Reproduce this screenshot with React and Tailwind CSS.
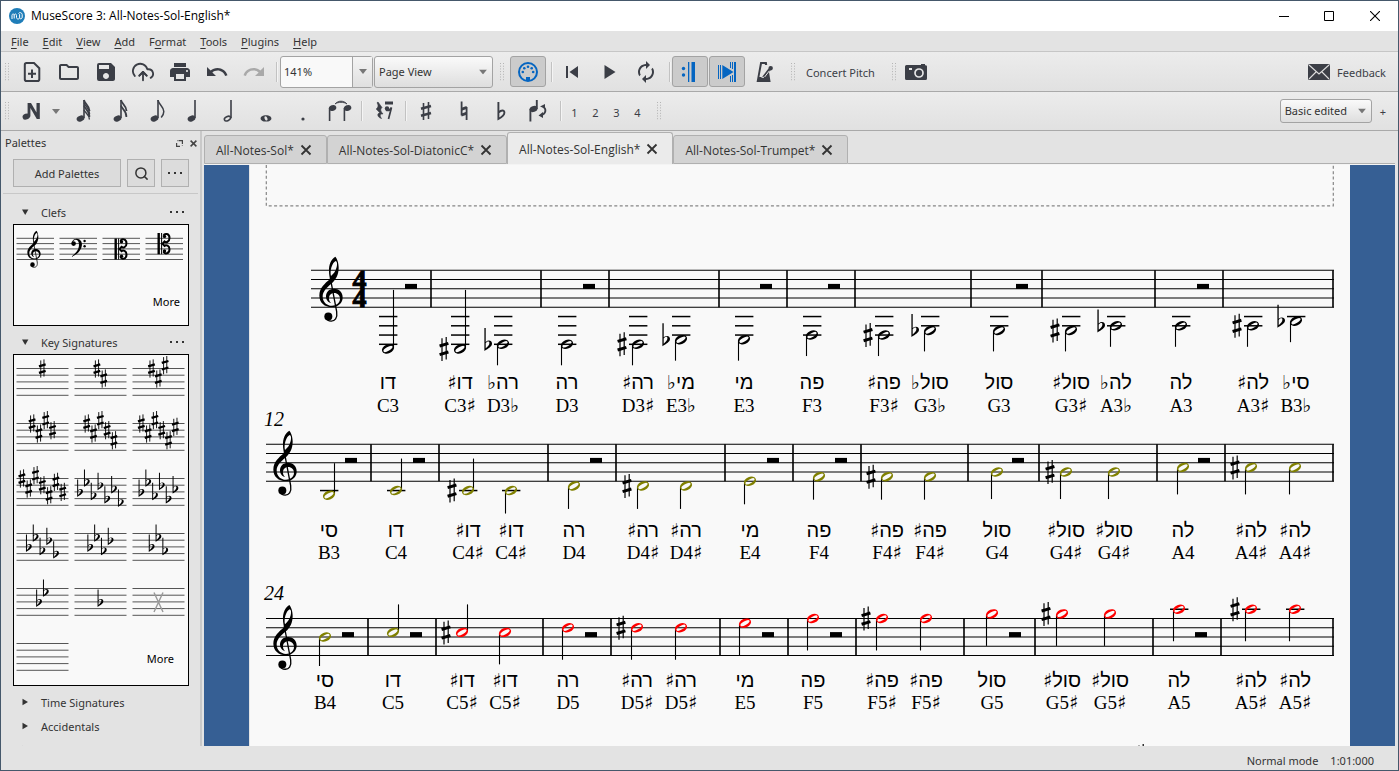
import React from "react";
import { MdPrint, MdSync, MdOutlineFolder, MdSave, MdUndo, MdRedo } from "react-icons/md";
import { FiUploadCloud, FiSearch } from "react-icons/fi";

const SPACE = 9.25;

/* ---------- engraving glyphs, drawn around their own origin ---------- */

function Sharp({ x, y, scale = 1 }) {
  return (
    <g transform={`translate(${x} ${y}) scale(${scale})`} stroke="currentColor" fill="none">
      <path d="M-2 -10.6V12M2.2 -12V10.6" strokeWidth="1.2" />
      <path d="M-4.4 -2.9L4.4 -5.5M-4.4 5.7L4.4 3.1" strokeWidth="3" />
    </g>
  );
}

function Flat({ x, y, scale = 1 }) {
  return (
    <g transform={`translate(${x} ${y}) scale(${scale})`}>
      <path
        fill="currentColor"
        fillRule="evenodd"
        d="M-3.6 -16.4H-2.3V-2.4C0.2 -4.6 4 -4 4 -0.8C4 2.4 0.4 4.2 -3.6 6.6ZM-2.3 4C-0.2 2.2 1.4 0.6 1.4 -1.4C1.4 -3.6 -1 -3.2 -2.3 -1.2Z"
      />
    </g>
  );
}

function TrebleClef({ x, y, scale = 1 }) {
  return (
    <g transform={`translate(${x} ${y}) scale(${scale / 3}) translate(-392 -505)`}>
      <path
        fill="currentColor"
        fillRule="evenodd"
        d="M405 381C393 387 385 405 386 425C386 434 388 441 389 448C374 461 357 475 357 497C357 519 373 532 394 532C414 532 427 519 427 503C427 487 415 477 401 477C386 477 377 488 377 500C377 510 384 518 392 520C387 514 385 508 386 503C387 495 394 490 401 490C412 490 419 498 419 507C419 519 408 528 395 528C379 528 367 516 367 500C367 486 378 474 394 461C407 450 415 434 415 414C415 399 410 386 405 381ZM406 394C411 396 411 404 409 412C406 425 399 433 392 439C388 424 395 399 406 394Z"
      />
      <path d="M390 445L409 546C412 566 403 574 393 574C384 574 378 570 376 563" fill="none" stroke="currentColor" strokeWidth="4" />
      <circle cx="384" cy="560" r="12" fill="currentColor" />
    </g>
  );
}

const HEAD =
  "M-5.84 2.36A6.3 4.3 -22 1 1 5.84 -2.36A6.3 4.3 -22 1 1 -5.84 2.36ZM-4.41 2.6A5.1 1.9 -30 1 0 4.41 -2.6A5.1 1.9 -30 1 0 -4.41 2.6Z";

/* ---------- score data: [x, step above bottom line, hebrew, latin, accidental, stem] ---------- */

const OLIVE = "#808000";
const RED = "#ff0000";

const systems = [
  {
    top: 270.3, left: 311, clefX: 331, number: null, heb: 389, lat: 412,
    bars: [431, 541, 609, 719, 787, 855, 971, 1042, 1155, 1223, 1333],
    rests: [411, 589, 766, 834, 1022, 1203],
    notes: [
      [388, -9, "דו", "C3", "", "up"],
      [460, -9, "דו♯", "C3♯", "s", "up"],
      [503, -8, "רה♭", "D3♭", "f"],
      [567, -8, "רה", "D3", ""],
      [638, -8, "רה♯", "D3♯", "s"],
      [681, -7, "מי♭", "E3♭", "f"],
      [744, -7, "מי", "E3", ""],
      [812, -6, "פה", "F3", ""],
      [884, -6, "פה♯", "F3♯", "s"],
      [930, -5, "סול♭", "G3♭", "f"],
      [999, -5, "סול", "G3", ""],
      [1071, -5, "סול♯", "G3♯", "s"],
      [1116, -4, "לה♭", "A3♭", "f"],
      [1181, -4, "לה", "A3", ""],
      [1253, -4, "לה♯", "A3♯", "s"],
      [1296, -3, "סי♭", "B3♭", "f"],
    ],
  },
  {
    top: 444.3, left: 266, clefX: 285, number: "12", heb: 537, lat: 559,
    bars: [371, 439, 548, 616, 725, 793, 861, 968, 1039, 1157, 1225, 1333],
    rests: [351, 419, 596, 773, 841, 1018, 1204],
    notes: [
      [329, -3, "סי", "B3", "", "up", OLIVE],
      [396, -2, "דו", "C4", "", "up", OLIVE],
      [468, -2, "דו♯", "C4♯", "s", "up", OLIVE],
      [511, -2, "דו♯", "C4♯", "", "", OLIVE],
      [574, -1, "רה", "D4", "", "", OLIVE],
      [643, -1, "רה♯", "D4♯", "s", "", OLIVE],
      [686, -1, "רה♯", "D4♯", "", "", OLIVE],
      [750, 0, "מי", "E4", "", "", OLIVE],
      [819, 1, "פה", "F4", "", "", OLIVE],
      [887, 1, "פה♯", "F4♯", "s", "", OLIVE],
      [930, 1, "פה♯", "F4♯", "", "", OLIVE],
      [997, 2, "סול", "G4", "", "", OLIVE],
      [1066, 2, "סול♯", "G4♯", "s", "", OLIVE],
      [1114, 2, "סול♯", "G4♯", "", "", OLIVE],
      [1183, 3, "לה", "A4", "", "", OLIVE],
      [1251, 3, "לה♯", "A4♯", "s", "", OLIVE],
      [1295, 3, "לה♯", "A4♯", "", "", OLIVE],
    ],
  },
  {
    top: 618.5, left: 266, clefX: 285, number: "24", heb: 687, lat: 709,
    bars: [368, 436, 543, 611, 720, 788, 856, 964, 1035, 1153, 1221, 1333],
    rests: [348, 416, 591, 768, 836, 1015, 1201],
    notes: [
      [325, 4, "סי", "B4", "", "", OLIVE],
      [393, 5, "דו", "C5", "", "up", OLIVE],
      [462, 5, "דו♯", "C5♯", "s", "up", RED],
      [505, 5, "דו♯", "C5♯", "", "", RED],
      [568, 6, "רה", "D5", "", "", RED],
      [637, 6, "רה♯", "D5♯", "s", "", RED],
      [681, 6, "רה♯", "D5♯", "", "", RED],
      [745, 7, "מי", "E5", "", "", RED],
      [813, 8, "פה", "F5", "", "", RED],
      [882, 8, "פה♯", "F5♯", "s", "", RED],
      [926, 8, "פה♯", "F5♯", "", "", RED],
      [992, 9, "סול", "G5", "", "", RED],
      [1062, 9, "סול♯", "G5♯", "s", "", RED],
      [1110, 9, "סול♯", "G5♯", "", "", RED],
      [1179, 10, "לה", "A5", "", "", RED],
      [1251, 10, "לה♯", "A5♯", "s", "", RED],
      [1295, 10, "לה♯", "A5♯", "", "", RED],
    ],
  },
];

function stemLength(step, up) {
  if (up) return step < -5 ? 59 : step < 0 ? 32 : 28;
  if (step < -2) return 21;
  if (step < 2) return 23;
  if (step < 4) return 27;
  return step < 5 ? 29 : 32;
}

/* A note name whose trailing sharp or flat sign is set one size down. */
function NoteName({ name }) {
  const sign = /[♯♭]$/.test(name) ? name.slice(-1) : "";
  const base = sign ? name.slice(0, -1) : name;
  return (
    <>
      {base}
      {sign && <tspan className="font-['DejaVu_Sans',sans-serif] text-[19px]">{sign}</tspan>}
    </>
  );
}

function Note({ note, system }) {
  const [x, step, heb, lat, acc, stem, color = "#000"] = note;
  const bottom = system.top + 4 * SPACE;
  const y = bottom - (step * SPACE) / 2;
  const up = stem === "up";
  const ledgers = [];
  for (let s = -2; s >= step; s -= 2) ledgers.push(s);
  for (let s = 10; s <= step; s += 2) ledgers.push(s);
  const len = stemLength(step, up);
  return (
    <g>
      {ledgers.map((s) => (
        <path key={s} d={`M${x - 9} ${bottom - (s * SPACE) / 2}h18.4`} stroke="#000" strokeWidth="1.5" />
      ))}
      <path d={up ? `M${x + 5.5} ${y - 1}V${y - len}` : `M${x - 5.5} ${y + 1}V${y + len}`} stroke="#000" strokeWidth="1.1" />
      <path d={HEAD} transform={`translate(${x} ${y})`} fill={color} fillRule="evenodd" />
      {acc === "s" && <Sharp x={x - 16} y={y} />}
      {acc === "f" && <Flat x={x - 15} y={y} />}
      <text x={x} y={system.heb} textAnchor="middle" direction="rtl" className="font-['Liberation_Sans','DejaVu_Sans',sans-serif] text-[20px]">
        <NoteName name={heb} />
      </text>
      <text x={x} y={system.lat} textAnchor="middle" className="font-['Liberation_Serif','DejaVu_Sans',serif] text-[19px]">
        <NoteName name={lat} />
      </text>
    </g>
  );
}

function Score() {
  return (
    <svg viewBox="250 165 1100 581" role="img" aria-label="Score page" className="block h-[581px] w-[1100px] shrink-0 text-black">
      <path d="M266.3 165V205.8H1333.3V165" fill="none" stroke="#858585" strokeWidth="1.2" strokeDasharray="3 2.4" />
      {systems.map((s) => (
        <g key={s.top}>
          {[0, 1, 2, 3, 4].map((i) => (
            <path key={i} d={`M${s.left} ${s.top + i * SPACE}H1334`} stroke="#000" strokeWidth="1.1" />
          ))}
          {s.bars.map((b) => (
            <path key={b} d={`M${b} ${s.top}V${s.top + 4 * SPACE}`} stroke="#000" strokeWidth="1.6" />
          ))}
          {s.rests.map((r) => (
            <rect key={r} x={r - 6} y={s.top + 13.6} width="12" height="5" />
          ))}
          <TrebleClef x={s.clefX} y={s.top + 3 * SPACE} />
          {s.number && (
            <text x="264" y={s.top - 18.3} className="font-['Liberation_Serif',serif] text-[20px] italic">
              {s.number}
            </text>
          )}
          {s.notes.map((n) => (
            <Note key={n[0]} note={n} system={s} />
          ))}
        </g>
      ))}
      <g className="font-['Liberation_Serif',serif] text-[28px] font-bold" stroke="#000" strokeWidth="1">
        <text x="359.5" y="288.8" textAnchor="middle">4</text>
        <text x="359.5" y="307.3" textAnchor="middle">4</text>
      </g>
      <Sharp x={1141} y={756} />
    </svg>
  );
}

/* ---------- toolbar parts ---------- */

const Grip = () => (
  <svg width="6" height="18" className="shrink-0" aria-hidden="true">
    {[0, 1, 2, 3, 4, 5, 6].map((i) => (
      <g key={i} fill="#b4b4b4">
        <rect x="0" y={i * 2.7} width="1" height="1" />
        <rect x="3" y={i * 2.7} width="1" height="1" />
      </g>
    ))}
  </svg>
);

const Divider = () => <span className="h-5 w-[2px] shrink-0 border-l border-[#c2c2c2] bg-[#f4f4f4]" />;

function Tool({ label, children, wide = "w-[37px]" }) {
  return (
    <button type="button" aria-label={label} className={`flex h-8 shrink-0 items-center justify-center ${wide}`}>
      {children}
    </button>
  );
}

function Pressed({ label, children }) {
  return (
    <button type="button" aria-label={label} aria-pressed="true" className="flex h-[31px] w-9 shrink-0 items-center justify-center rounded-[3px] border border-[#a3a3a3] bg-[#cbcbcb] text-[#0565c1]">
      {children}
    </button>
  );
}

const Svg = ({ children, w = 24 }) => (
  <svg width={w} height="24" viewBox={`0 0 ${w} 24`} fill="currentColor" aria-hidden="true">
    {children}
  </svg>
);

const Arrow = ({ className = "" }) => (
  <svg width="8" height="5" viewBox="0 0 8 5" className={className} aria-hidden="true">
    <path d="M0 0H8L4 5Z" fill="#777" />
  </svg>
);

function NoteIcon({ flags = 0, open = false }) {
  const x = flags ? 9.5 : 10.5;
  return (
    <Svg>
      {open ? (
        <ellipse cx={x} cy="19.6" rx="3.3" ry="2" transform={`rotate(-25 ${x} 19.6)`} fill="none" stroke="currentColor" strokeWidth="1.6" />
      ) : (
        <ellipse cx={x} cy="19.6" rx="4" ry="2.9" transform={`rotate(-22 ${x} 19.6)`} />
      )}
      <path d={`M${x + 3.5} 1V19`} stroke="currentColor" strokeWidth="1.6" />
      {flags === 1 && <path d="M13 1C13.6 5.5 18.8 7.5 18.8 12.5C18.8 15 17.6 17 16.2 18.6" fill="none" stroke="currentColor" strokeWidth="1.5" />}
      {flags > 1 && (
        <path d="M13 1C13.6 5 18.6 6.5 18.6 12M13 6.5C14 10.5 18.8 11.5 18.4 18" fill="none" stroke="currentColor" strokeWidth="1.7" />
      )}
      {flags > 2 && <path d="M13 3.5C14 8 18.6 8.5 18.6 15M13 11C14.5 14.5 18.6 15.5 18.4 20.5" fill="none" stroke="currentColor" strokeWidth="1.4" />}
    </Svg>
  );
}

function Combo({ label, value, options, className }) {
  return (
    <span className={`relative inline-flex shrink-0 ${className}`}>
      <select aria-label={label} defaultValue={value} className="h-full w-full appearance-none rounded-[3px] border border-[#a3a3a3] bg-linear-to-b from-[#fafafa] to-[#dedede] pl-1 text-[#333]">
        {options.map((o) => <option key={o}>{o}</option>)}
      </select>
      <Arrow className="pointer-events-none absolute top-1/2 right-[6px] -translate-y-1/2" />
    </span>
  );
}

function MainToolbar() {
  return (
    <div className="flex h-10 items-center border-b border-[#a9a9a9] bg-linear-to-b from-[#ececec] to-[#e1e1e1] text-[#3b3e46]">
      <span className="ml-1 flex"><Grip /></span>
      <div className="ml-[2px] flex">
        <Tool label="New">
          <Svg>
            <path d="M5.8 3H14L19.3 8.2V19.2Q19.3 21 17.5 21H6.5Q4.8 21 4.8 19.2V4.8Q4.8 3 6.5 3Z" fill="none" stroke="currentColor" strokeWidth="2" />
            <path d="M12 9.5V18M8 13.7H16" stroke="currentColor" strokeWidth="2" />
          </Svg>
        </Tool>
        <Tool label="Open"><MdOutlineFolder className="size-6" /></Tool>
        <Tool label="Save"><MdSave className="size-6" /></Tool>
        <Tool label="Save online"><FiUploadCloud className="size-[22px]" /></Tool>
        <Tool label="Print"><MdPrint className="size-6" /></Tool>
        <Tool label="Undo"><MdUndo className="size-6" /></Tool>
        <Tool label="Redo"><MdRedo className="size-6 text-[#a9a9a9]" /></Tool>
      </div>
      <span className="ml-1 flex"><Divider /></span>
      <span className="ml-[2px] flex h-8 w-[93px] shrink-0 rounded-[3px] border border-[#a3a3a3] bg-[#f9f9f9]">
        <input aria-label="Zoom" defaultValue="141%" className="w-[71px] bg-transparent pl-[3px] text-[#333] outline-none" />
        <button type="button" aria-label="Zoom levels" className="flex flex-1 items-center justify-center border-l border-[#a3a3a3] bg-linear-to-b from-[#f4f4f4] to-[#e0e0e0]">
          <Arrow />
        </button>
      </span>
      <Combo label="View mode" value="Page View" options={["Page View", "Continuous View", "Single Page"]} className="ml-[1px] h-8 w-[119px]" />
      <span className="mr-1 ml-[7px] flex"><Grip /></span>
      <Pressed label="MIDI input">
        <Svg>
          <circle cx="12" cy="12" r="9" fill="none" stroke="currentColor" strokeWidth="2" />
          <circle cx="6.8" cy="12" r="1.3" /><circle cx="8.3" cy="8.3" r="1.3" /><circle cx="12" cy="6.7" r="1.3" /><circle cx="15.7" cy="8.3" r="1.3" /><circle cx="17.2" cy="12" r="1.3" />
          <rect x="10" y="17" width="4" height="4" />
        </Svg>
      </Pressed>
      <span className="ml-[5px] flex"><Divider /></span>
      <Tool label="Rewind">
        <Svg><path d="M6 6H8V18H6ZM18 6V18L9.5 12Z" /></Svg>
      </Tool>
      <Tool label="Play"><Svg><path d="M7.5 5L18.5 12L7.5 19Z" /></Svg></Tool>
      <Tool label="Loop"><MdSync className="size-6 -scale-x-100" /></Tool>
      <span className="mr-[1px] ml-[5px] flex"><Divider /></span>
      <Pressed label="Play repeats">
        <Svg>
          <circle cx="5.5" cy="8.5" r="1.7" /><circle cx="5.5" cy="15" r="1.7" />
          <path d="M10 2h1.3v20H10ZM13.5 2h3.5v20h-3.5Z" />
        </Svg>
      </Pressed>
      <span className="ml-[1px] flex">
        <Pressed label="Pan score">
          <Svg>
            <path d="M3 5h1v14H3ZM5 5h1v14H5ZM7.3 5L18.5 12L7.3 19ZM15 2h1v6h-1ZM17 2h1v7h-1ZM15 16h1v6h-1ZM17 15h1v7h-1ZM19 2h2v20h-2Z" />
          </Svg>
        </Pressed>
      </span>
      <Tool label="Metronome">
        <Svg>
          <path d="M8.2 2H14.8L15.2 5H13L12.8 4H9.9L7.4 17H10L16.5 8.5A2.2 2.2 0 1 1 18.4 10.4L17 12L18.6 22H4.6Z" />
          <path d="M12.6 17L17.4 10.8M9.5 17.3H12" stroke="#e6e6e6" strokeWidth="1" />
          <path d="M10 8.5L13.8 7.5L12 13L9 16Z" fill="#e6e6e6" />
        </Svg>
      </Tool>
      <span className="ml-[9px] flex"><Grip /></span>
      <button type="button" className="mr-[17px] ml-[9px] shrink-0 pt-[2px]">Concert Pitch</button>
      <Grip />
      <Tool label="Image capture">
        <svg width="22" height="16" viewBox="0 0 22 16" aria-hidden="true">
          <path fill="currentColor" fillRule="evenodd" d="M1.5 1H16V0H20V1.2Q22 1 22 2.6V14.5Q22 16 20.5 16H1.5Q0 16 0 14.5V2.5Q0 1 1.5 1ZM4 4V6H7V4Z" />
          <circle cx="14" cy="9" r="4" fill="none" stroke="#e6e6e6" strokeWidth="1.7" />
        </svg>
      </Tool>
      <button type="button" className="mr-3 ml-auto flex shrink-0 items-center gap-[7px]">
        <svg width="22" height="16" viewBox="0 0 22 16" aria-hidden="true">
          <rect width="22" height="16" rx="1.5" fill="#3b3e46" />
          <path d="M1 1L11 10L21 1M1 15L8 8M21 15L14 8" fill="none" stroke="#ddd" strokeWidth="1.1" />
        </svg>
        <span className="pt-[2px]">Feedback</span>
      </button>
    </div>
  );
}

function NoteToolbar() {
  return (
    <div className="flex h-[39px] items-center border-b border-[#a9a9a9] bg-linear-to-b from-[#ececec] to-[#e1e1e1] text-[#3b3e46]">
      <span className="mr-[3px] ml-1 flex"><Grip /></span>
      <Tool label="Note input" wide="w-9">
        <Svg>
          <ellipse cx="6.3" cy="17.6" rx="3.8" ry="2.9" transform="rotate(-20 6.3 17.6)" />
          <path d="M7.6 4H11L16.5 13.5V4H19.8V20H16.8L10.4 9V17.6H7.6Z" />
        </Svg>
      </Tool>
      <span className="mr-[2px] flex"><Tool label="Input mode" wide="w-3"><Arrow /></Tool></span>
      <Tool label="32nd note"><NoteIcon flags={3} /></Tool>
      <Tool label="16th note"><NoteIcon flags={2} /></Tool>
      <Tool label="Eighth note"><NoteIcon flags={1} /></Tool>
      <Tool label="Quarter note" wide="w-9"><NoteIcon /></Tool>
      <Tool label="Half note" wide="w-9"><NoteIcon open /></Tool>
      <Tool label="Whole note" wide="w-[37px]">
        <Svg><path fillRule="evenodd" d="M12 16.2C15 16.2 17.4 17.5 17.4 19.4S15 22.6 12 22.6S6.6 21.3 6.6 19.4S9 16.2 12 16.2ZM11.2 17.2C9.6 17.8 10.8 21.6 12.8 21.5C14.6 21 13 17 11.2 17.2Z" /></Svg>
      </Tool>
      <Tool label="Augmentation dot"><Svg><circle cx="12" cy="20" r="1.6" /></Svg></Tool>
      <Tool label="Tie">
        <Svg w={26}>
          <path d="M8 5C11 1.2 17 1.2 20 5C17 2.8 11 2.8 8 5Z" stroke="currentColor" strokeWidth="0.8" />
          <ellipse cx="5.6" cy="9" rx="3.8" ry="2.8" transform="rotate(-20 5.6 9)" />
          <ellipse cx="20.6" cy="9" rx="3.8" ry="2.8" transform="rotate(-20 20.6 9)" />
          <path d="M2.6 9V22M17.4 9V22" stroke="currentColor" strokeWidth="1.6" />
        </Svg>
      </Tool>
      <span className="ml-[3px] flex"><Divider /></span>
      <Tool label="Rest" wide="w-[42px]">
        <Svg>
          <path d="M6 3L10 8.5C8 10.5 8.5 12 11 15C8 14.5 7.5 16.5 9.5 19.5C5.5 18.5 4.5 14.5 7.8 13.8L4.2 10C6.5 7.8 6.5 6.5 5 3.8Z" stroke="currentColor" strokeWidth="0.6" />
          <rect x="13" y="2.5" width="8" height="3" />
          <circle cx="15" cy="9.5" r="2.2" />
          <path d="M14 11.3C16.5 12 18.5 10.5 19.5 8.5L16.5 20" fill="none" stroke="currentColor" strokeWidth="1.7" />
        </Svg>
      </Tool>
      <Divider />
      <Tool label="Sharp" wide="w-[38px]">
        <Svg><path d="M9.5 4V21M14.5 3V20" fill="none" stroke="currentColor" strokeWidth="1.6" /><path d="M7 9.8L17 7M7 16.8L17 14" stroke="currentColor" strokeWidth="2.6" /></Svg>
      </Tool>
      <Tool label="Natural">
        <Svg><path d="M9.6 2.5V16.5M14.6 21V8" fill="none" stroke="currentColor" strokeWidth="1.8" /><path d="M9.6 8.8L14.6 7V10L9.6 11.8ZM9.6 14.5L14.6 12.7V15.7L9.6 17.5Z" /></Svg>
      </Tool>
      <Tool label="Flat">
        <Svg><path fill="none" stroke="currentColor" strokeWidth="1.9" d="M9.4 3V20C13 18 15.4 16 15.4 13.4C15.4 10.8 12 11 9.8 13.4" /></Svg>
      </Tool>
      <Tool label="Flip direction">
        <Svg>
          <ellipse cx="7.5" cy="10" rx="4" ry="2.9" transform="rotate(-20 7.5 10)" />
          <path d="M4.4 10V22.5" stroke="currentColor" strokeWidth="1.9" />
          <path d="M10.8 1V10" stroke="currentColor" strokeWidth="1.9" />
          <path d="M17 7.5C20.5 10 20.5 14.5 15 16.5" fill="none" stroke="currentColor" strokeWidth="1.8" />
          <path d="M14 7.5L19 5V9.5ZM17 13V19L12.5 16.6Z" />
        </Svg>
      </Tool>
      <span className="mr-[2px] ml-1 flex"><Divider /></span>
      {["1", "2", "3", "4"].map((v) => (
        <button key={v} type="button" aria-label={`Voice ${v}`} className="h-8 w-[21px] shrink-0 pt-[3px]">{v}</button>
      ))}
      <span className="ml-[9px] flex"><Grip /></span>
      <Combo label="Workspace" value="Basic edited" options={["Basic edited", "Basic", "Advanced"]} className="ml-auto h-6 w-[92px]" />
      <button type="button" aria-label="Add workspace" className="mr-3 ml-2 pt-[2px]">+</button>
    </div>
  );
}

/* ---------- palettes ---------- */

const SHARP_STEPS = [0, 3, -1, 2, 5, 1, 4];
const FLAT_STEPS = [4, 1, 5, 2, 6, 3, 7];

function KeyCell({ sharps = 0, flats = 0, none = false }) {
  const count = sharps || flats;
  const steps = (sharps ? SHARP_STEPS : FLAT_STEPS).slice(0, count);
  const Glyph = sharps ? Sharp : Flat;
  return (
    <svg viewBox="0 0 58 55" className="block h-[55px] w-full text-black" aria-hidden="true">
      {[0, 1, 2, 3, 4].map((i) => (
        <path key={i} d={`M2.5 ${13.5 + i * 6.7}H54.5`} stroke="#555" strokeWidth="1" />
      ))}
      {steps.map((s, i) => (
        <Glyph key={i} x={28.3 + (i - (count - 1) / 2) * 6.8} y={13.5 + s * 3.35} scale={0.76} />
      ))}
      {none && <path d="M24 17.5L33 37M33 17.5L24 37" stroke="#999" strokeWidth="1.4" />}
    </svg>
  );
}

const keyCells = [
  { sharps: 1 }, { sharps: 2 }, { sharps: 3 },
  { sharps: 4 }, { sharps: 5 }, { sharps: 6 },
  { sharps: 7 }, { flats: 7 }, { flats: 6 },
  { flats: 5 }, { flats: 4 }, { flats: 3 },
  { flats: 2 }, { flats: 1 }, { none: true }, {},
];

function CClef({ y }) {
  return (
    <g transform={`translate(14.5 ${y})`}>
      <path d="M0 -10.6H2.4V10.6H0ZM3.6 -10.6H4.6V10.6H3.6Z" />
      <path d="M6 -8C7 -10.6 12 -10.5 12 -5.6C12 -1.8 8.5 -0.8 7 -2.2L5 0L7 2.2C8.5 0.8 12 1.8 12 5.6C12 10.5 7 10.6 6 8" fill="none" stroke="#000" strokeWidth="2" />
      <circle cx="7" cy="-7.3" r="1.7" /><circle cx="7" cy="7.3" r="1.7" />
    </g>
  );
}

function ClefCell({ kind }) {
  return (
    <svg viewBox="0 0 43 50" className="block h-[50px] w-full text-black" aria-hidden="true">
      {[0, 1, 2, 3, 4].map((i) => (
        <path key={i} d={`M2.5 ${13.3 + i * 5.3}H40`} stroke="#555" strokeWidth="1" />
      ))}
      {kind === "treble" && <TrebleClef x={20} y={29.2} scale={0.57} />}
      {kind === "bass" && (
        <g>
          <path d="M14.5 18C15.5 13.5 20 12.8 22.5 14.5C25.5 16.5 26 21.5 22.5 26C20 29.3 17 31 14 32C18.5 28.5 22 25 22 19.5C22 14.5 18 13.5 16 16.5Z" />
          <circle cx="16.6" cy="18.6" r="2.3" /><circle cx="27.6" cy="16" r="1.2" /><circle cx="27.6" cy="21.2" r="1.2" />
        </g>
      )}
      {kind === "alto" && <CClef y={24} />}
      {kind === "tenor" && <CClef y={18.7} />}
    </svg>
  );
}

const Dots = () => (
  <svg width="14" height="2" viewBox="0 0 14 2" aria-hidden="true">
    <path d="M0 0h2v2H0ZM6 0h2v2H6ZM12 0h2v2h-2Z" fill="#333" />
  </svg>
);

function PaletteHeader({ title, open, className = "h-6" }) {
  return (
    <div className={`flex items-center pr-[5px] pl-2 ${className}`}>
      <button type="button" aria-expanded={open} className="flex flex-1 items-center text-left">
        <svg width="8" height="8" viewBox="0 0 8 8" className="mr-3" aria-hidden="true">
          <path d={open ? "M1 1.5H7.4L4.2 7Z" : "M1.5 0.8V7.2L7 4Z"} fill="#333" />
        </svg>
        <span className="pt-[2px]">{title}</span>
      </button>
      {open && <button type="button" aria-label={`${title} options`} className="flex h-4 items-center"><Dots /></button>}
    </div>
  );
}

function Palettes() {
  const square = "flex h-7 items-center justify-center border border-[#b0b0b0] bg-[#dcdcdc]";
  return (
    <aside className="flex w-[201px] shrink-0 flex-col overflow-hidden border-r-2 border-[#c9c9c9] text-[#333]">
      <div className="flex h-6 shrink-0 items-center pr-[3px] pl-1">
        <h2 className="flex-1">Palettes</h2>
        <button type="button" aria-label="Float" className="mr-[7px]">
          <svg width="7" height="7" viewBox="0 0 7 7" aria-hidden="true"><path d="M3 0.6H6.4V4M0.6 3V6.4H4M2.5 0.6H1.5M6.4 5.5V6" fill="none" stroke="#444" strokeWidth="1.2" /></svg>
        </button>
        <button type="button" aria-label="Close palettes">
          <svg width="7" height="7" viewBox="0 0 7 7" aria-hidden="true"><path d="M0.6 0.6L6.4 6.4M6.4 0.6L0.6 6.4" stroke="#444" strokeWidth="1.5" /></svg>
        </button>
      </div>
      <div className="mx-[2px] flex h-[39px] shrink-0 gap-[6px] border-b border-[#c8c8c8] pt-1 pr-[9px] pl-[10px]">
        <button type="button" className={`flex-1 pt-[2px] ${square}`}>Add Palettes</button>
        <button type="button" aria-label="Search palettes" className={`w-7 ${square}`}><FiSearch className="size-[15px]" strokeWidth={2.4} /></button>
        <button type="button" aria-label="Palette options" className={`w-7 ${square}`}><Dots /></button>
      </div>
      <div className="pt-[6px] pr-[11px] pl-3">
        <PaletteHeader title="Clefs" open />
        <div className="grid grid-cols-4 border border-black bg-[#f9f9f9] pr-[2px]">
          {["treble", "bass", "alto", "tenor"].map((k) => <ClefCell key={k} kind={k} />)}
          <button type="button" className="col-span-4 flex h-[50px] items-center justify-end pt-1 pr-[6px] text-black">More</button>
        </div>
        <PaletteHeader title="Key Signatures" open className="h-7 pt-1" />
        <div className="grid grid-cols-3 border border-black bg-[#f9f9f9]">
          {keyCells.map((c, i) => <KeyCell key={i} {...c} />)}
          <button type="button" className="col-span-2 flex items-center justify-end pt-[2px] pr-[14px] text-black">More</button>
        </div>
        <PaletteHeader title="Time Signatures" className="mt-1 h-6" />
        <PaletteHeader title="Accidentals" />
        <PaletteHeader title="Articulations" className="h-[22px]" />
      </div>
    </aside>
  );
}

/* ---------- window ---------- */

const menus = [["", "F", "ile"], ["", "E", "dit"], ["", "V", "iew"], ["", "A", "dd"], ["F", "o", "rmat"], ["", "T", "ools"], ["", "P", "lugins"], ["", "H", "elp"]];
const tabs = ["All-Notes-Sol*", "All-Notes-Sol-DiatonicC*", "All-Notes-Sol-English*", "All-Notes-Sol-Trumpet*"];

function Tab({ name, active }) {
  return (
    <div
      className={
        active
          ? "flex h-8 items-center gap-[6px] rounded-t-[3px] border border-b-0 border-[#b0b0b0] bg-[#ebebeb] pr-[14px] pl-[11px]"
          : "flex h-[29px] items-center gap-[6px] rounded-t-[3px] border border-[#b0b0b0] bg-[#d3d3d3] pr-[14px] pl-[11px]"
      }
    >
      <button type="button" role="tab" aria-selected={active} className="pt-[2px]">{name}</button>
      <button type="button" aria-label={`Close ${name}`}>
        <svg width="12" height="12" viewBox="0 0 12 12" aria-hidden="true"><path d="M1.5 1.5L10.5 10.5M10.5 1.5L1.5 10.5" stroke="#333" strokeWidth="1.8" /></svg>
      </button>
    </div>
  );
}

export default function App() {
  return (
    <div className="flex h-screen flex-col overflow-hidden border border-[#45586b] bg-[#e3e3e3] font-['Noto_Sans','Open_Sans',sans-serif] text-[11px] leading-4 text-[#333]">
      <header className="flex h-[30px] shrink-0 items-center bg-white pl-2 text-black">
        <svg width="16" height="16" viewBox="0 0 16 16" className="mr-[6px]" aria-hidden="true">
          <circle cx="8" cy="8" r="8" fill="#1f7db8" />
          <path d="M3 11V7.5C3 5.5 5.2 5.5 5.2 7.5V10.5M5.2 7.5C5.2 5.5 7.5 5.5 7.5 7.5V9.5C7.5 11.5 10.6 11.5 10.6 9.5V6.2M10.6 9.5C10.6 11.3 13.2 11.3 13.2 9V6.5C13 4.5 10.5 4 9.5 5.5" fill="none" stroke="#fff" strokeWidth="1" />
        </svg>
        <h1 className="flex-1 font-['Open_Sans','Noto_Sans',sans-serif] text-[12px]">MuseScore 3: All-Notes-Sol-English*</h1>
        <button type="button" aria-label="Minimize" className="flex h-full w-[45px] items-center justify-center"><svg width="10" height="10"><path d="M0 5.5H10" stroke="#000" /></svg></button>
        <button type="button" aria-label="Maximize" className="flex h-full w-[45px] items-center justify-center"><svg width="10" height="10"><path d="M0.5 0.5H9.5V9.5H0.5Z" fill="none" stroke="#000" /></svg></button>
        <button type="button" aria-label="Close" className="flex h-full w-[47px] items-center justify-center"><svg width="10" height="10"><path d="M0 0L10 10M10 0L0 10" stroke="#000" strokeWidth="1.1" /></svg></button>
      </header>
      <nav className="flex h-[21px] shrink-0 items-center gap-[14px] border-b border-[#c6c6c6] pt-[2px] pl-[10px]">
        {menus.map(([a, u, b]) => (
          <button key={u + b} type="button">{a}<span className="underline underline-offset-2">{u}</span>{b}</button>
        ))}
      </nav>
      <MainToolbar />
      <NoteToolbar />
      <div className="flex min-h-0 flex-1">
        <Palettes />
        <main className="mr-[3px] ml-[2px] flex min-w-0 flex-1 flex-col">
          <div role="tablist" className="flex h-[34px] shrink-0 items-end border-b border-[#f4f4f4] font-['Open_Sans','Noto_Sans',sans-serif] text-[12px]">
            {tabs.map((t) => <Tab key={t} name={t} active={t === "All-Notes-Sol-English*"} />)}
            <span className="flex-1 border-b border-[#b0b0b0]" />
          </div>
          <section className="flex min-h-0 flex-1 items-start justify-center overflow-hidden bg-[#365f94]">
            <div className="flex h-full shrink-0 overflow-hidden border-l border-[#e5e5e5] bg-[#f9f9f9]">
              <Score />
            </div>
          </section>
        </main>
      </div>
      <footer className="flex h-6 shrink-0 items-center justify-end gap-3 pt-[6px] pr-6">
        <span>Normal mode</span>
        <span>1:01:000</span>
      </footer>
    </div>
  );
}
